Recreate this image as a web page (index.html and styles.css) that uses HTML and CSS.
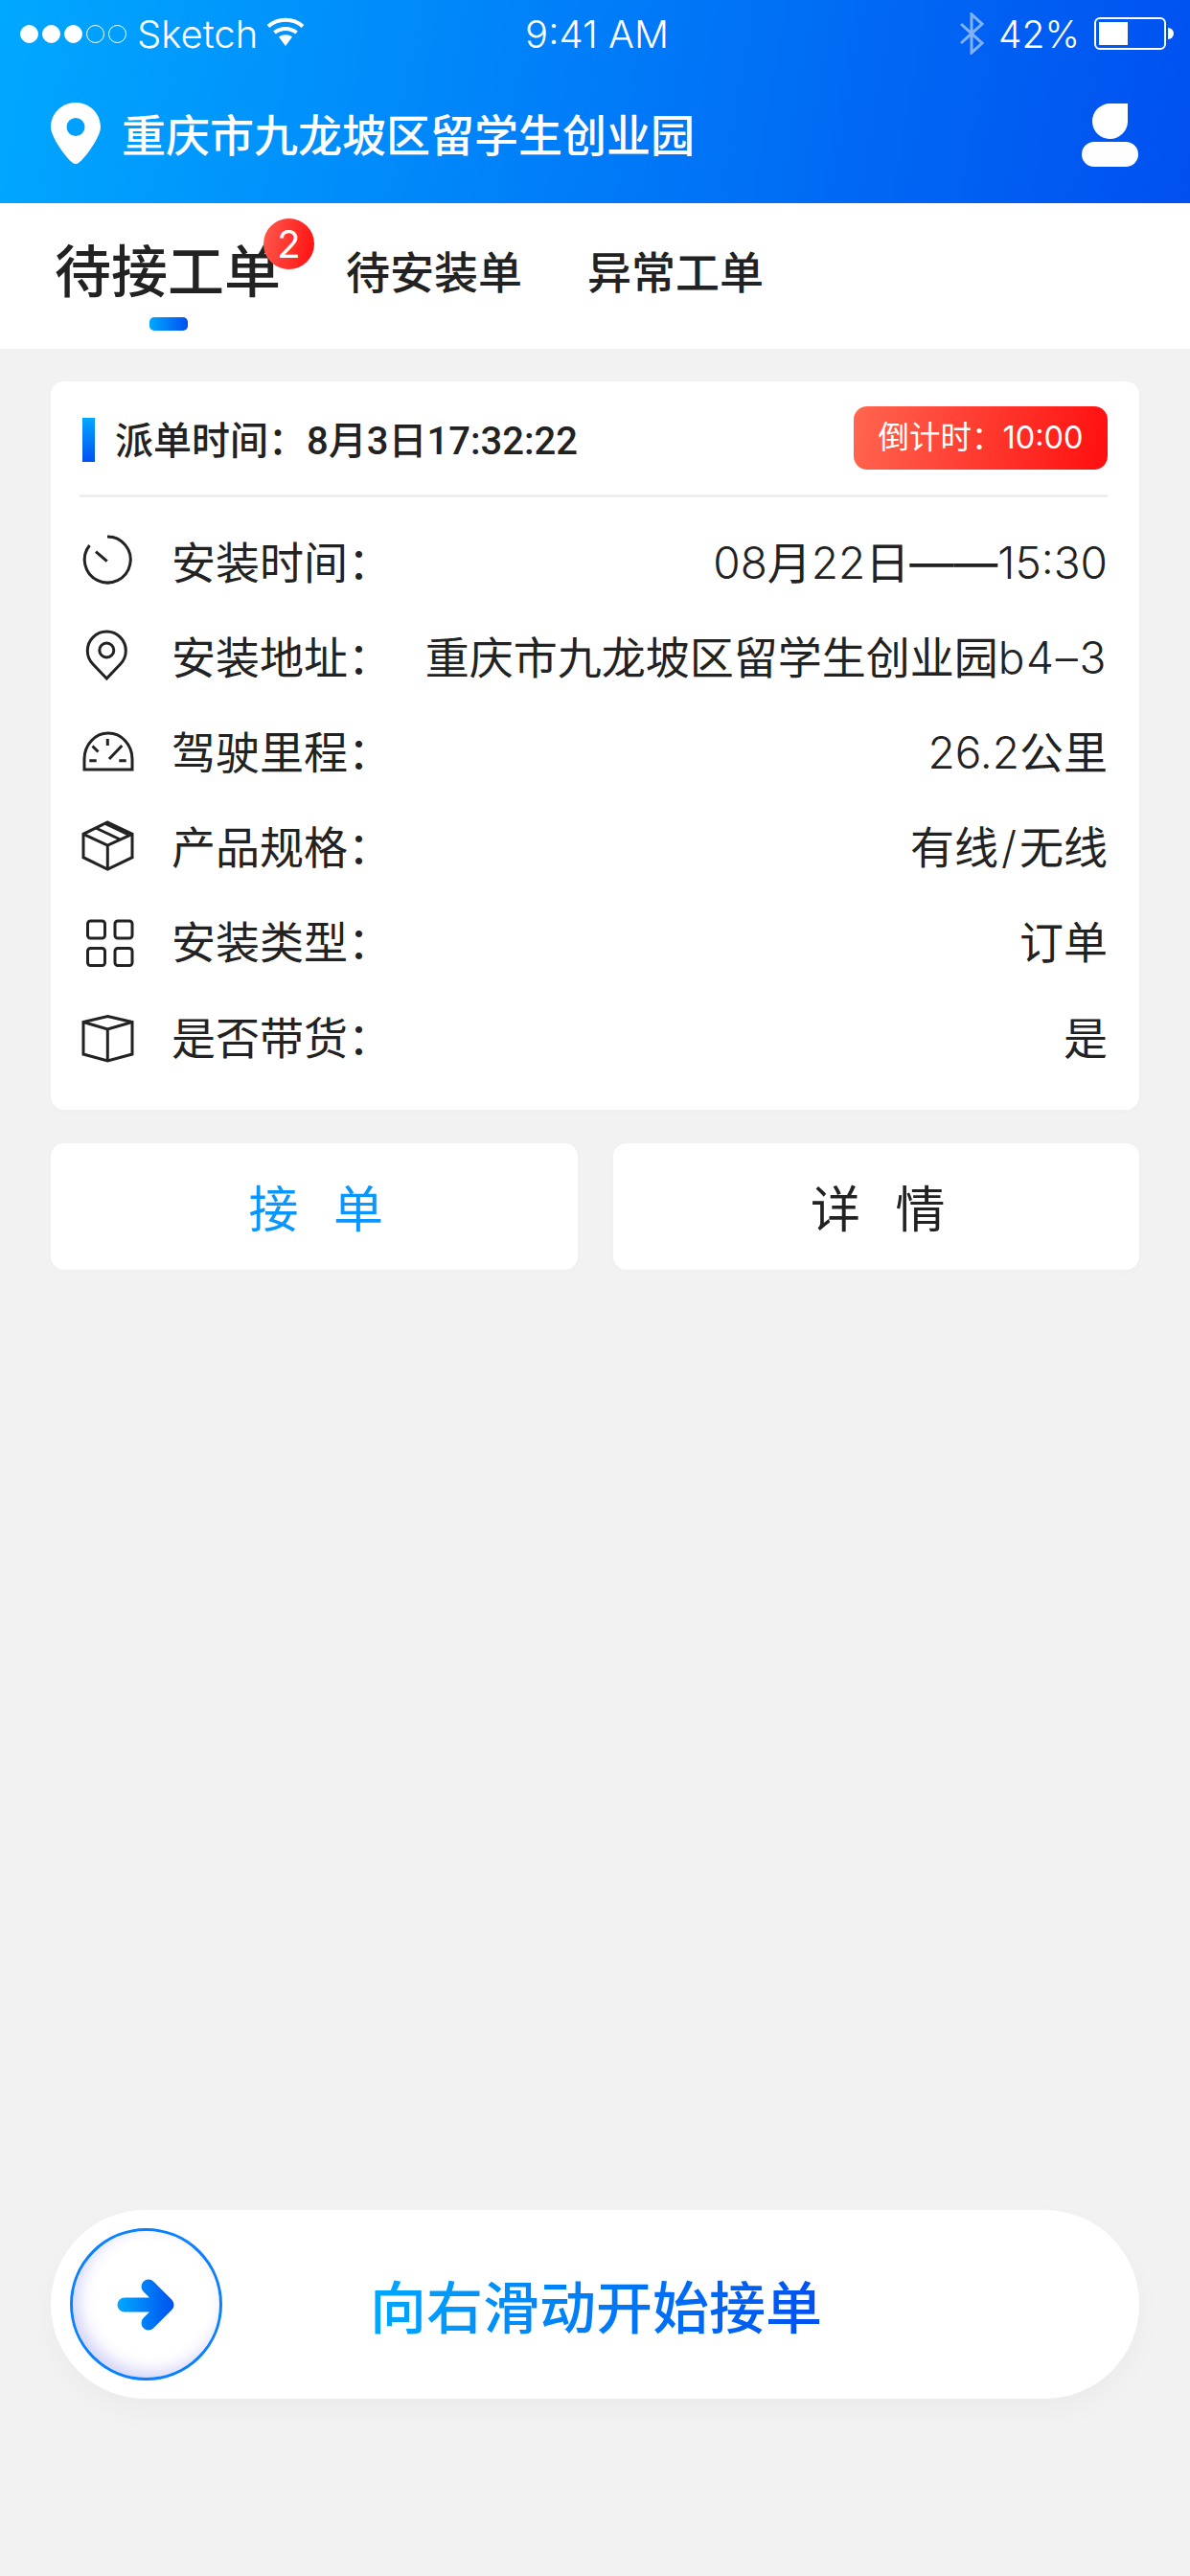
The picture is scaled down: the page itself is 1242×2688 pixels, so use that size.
FILE: index.html
```html
<!DOCTYPE html>
<html lang="zh-CN">
<head>
  <meta charset="UTF-8">
  <title>待接工单</title>
  <link rel="stylesheet" href="styles.css">
</head>
<body>

  <header class="top">
    <div class="status">
      <div class="status-left">
        <span class="dots"><i class="on"></i><i class="on"></i><i class="on"></i><i></i><i></i></span>
        <span class="carrier">Sketch</span>
        <svg class="wifi" width="40" height="30" viewBox="0 0 40 30">
          <path d="M2 9.500C12 0.500 28 0.500 38 9.500" fill="none" stroke="#fff" stroke-width="4"/>
          <path d="M8.500 16C15 10.500 25 10.500 31.500 16" fill="none" stroke="#fff" stroke-width="4"/>
          <path d="M13 20.500C17 17.500 23 17.500 27 20.500L20 30Z" fill="#fff"/>
        </svg>
      </div>
      <div class="status-time">9:41 AM</div>
      <div class="status-right">
        <svg class="bt" width="26" height="44" viewBox="0 0 26 44">
          <path d="M2 12L24 32L13 42V2L24 12L2 32" fill="none" stroke="#fff" stroke-width="3"/>
        </svg>
        <span class="percent">42%</span>
        <span class="battery"><span class="battery-fill"></span></span>
        <span class="battery-nub"></span>
      </div>
    </div>
    <div class="address-bar">
      <svg class="pin" width="52" height="64" viewBox="0 0 52 64">
        <path fill-rule="evenodd" fill="#fff" d="M26 0C40.500 0 52 11.500 52 25.500C52 36 36 58 29 63C27.500 64.300 24.500 64.300 23 63C16 58 0 36 0 25.500C0 11.500 11.500 0 26 0ZM26 16A9.500 9.500 0 1 0 26 35A9.500 9.500 0 1 0 26 16Z"/>
      </svg>
      <span class="address">重庆市九龙坡区留学生创业园</span>
      <svg class="profile" width="60" height="66" viewBox="0 0 60 66">
        <path fill="#fff" d="M29.500 0H48V19A18.500 18.500 0 1 1 29.500 0Z"/>
        <rect x="0" y="40" width="59" height="26" rx="13" fill="#fff"/>
      </svg>
    </div>
  </header>

  <nav class="tabs">
    <div class="tab tab-active">
      待接工单
      <span class="count">2</span>
      <span class="tab-line"></span>
    </div>
    <div class="tab">待安装单</div>
    <div class="tab">异常工单</div>
  </nav>

  <main class="content">
    <section class="card">
      <div class="card-head">
        <span class="mark"></span>
        <span class="dispatch">派单时间：8月3日17:32:22</span>
        <span class="countdown">倒计时：10:00</span>
      </div>

      <ul class="rows">
        <li class="row">
          <svg class="icon" width="54" height="54" viewBox="0 0 54 54">
            <path d="M27 3A24 24 0 1 1 8.500 12"/>
            <path d="M15 18.700L26.700 28.700"/>
          </svg>
          <span class="label">安装时间：</span>
          <span class="value"><span class="num">08</span>月<span class="num">22</span>日——<span class="num">15:30</span></span>
        </li>
        <li class="row">
          <svg class="icon" width="54" height="54" viewBox="0 0 54 54">
            <path d="M26.300 52L12 37A20 20 0 1 1 40.600 37Z"/>
            <circle cx="26.300" cy="22.500" r="7.500"/>
          </svg>
          <span class="label">安装地址：</span>
          <span class="value">重庆市九龙坡区留学生创业园<span class="num room">b4–3</span></span>
        </li>
        <li class="row">
          <svg class="icon" width="54" height="54" viewBox="0 0 54 54">
            <path d="M3 48V37A25 27 0 0 1 53 37V48Z"/>
            <path d="M27.300 16V23M11.500 23.500L17.500 29.500M42.300 23L29 37M8.300 38.700H15.700M39.300 38.700H46.700"/>
          </svg>
          <span class="label">驾驶里程：</span>
          <span class="value"><span class="num">26.2</span>公里</span>
        </li>
        <li class="row">
          <svg class="icon" width="54" height="54" viewBox="0 0 54 54">
            <path d="M27.300 4L53 16.300V40.700L27.300 53L2 40.700V16.300Z"/>
            <path d="M2 16.300L27.300 28L53 16.300M27.300 28V53M15 10L40.500 22M25 5.500L49 17"/>
          </svg>
          <span class="label">产品规格：</span>
          <span class="value">有线<span class="num slash">/</span>无线</span>
        </li>
        <li class="row">
          <svg class="icon" width="54" height="54" viewBox="0 0 54 54">
            <rect x="6.500" y="8" width="18" height="18" rx="3"/>
            <rect x="35" y="8" width="18" height="18" rx="3"/>
            <rect x="6.500" y="36.500" width="18" height="18" rx="3"/>
            <rect x="35" y="36.500" width="18" height="18" rx="3"/>
          </svg>
          <span class="label">安装类型：</span>
          <span class="value">订单</span>
        </li>
        <li class="row">
          <svg class="icon" width="54" height="54" viewBox="0 0 54 54">
            <path d="M27.300 7.500L53 13.500V47L27.300 54L2 47V13.500Z"/>
            <path d="M2 13.500L27.300 21L53 13.500M27.300 21V54"/>
          </svg>
          <span class="label">是否带货：</span>
          <span class="value">是</span>
        </li>
      </ul>
    </section>

    <div class="actions">
      <button class="action action-accept">接 单</button>
      <button class="action">详 情</button>
    </div>
  </main>

  <div class="slider">
    <span class="knob">
      <svg width="80" height="70" viewBox="0 0 80 70">
        <defs>
          <linearGradient id="arrowFill" gradientUnits="userSpaceOnUse" x1="10" y1="0" x2="68" y2="0">
            <stop offset="0" stop-color="#00a8ff"/>
            <stop offset="1" stop-color="#0052f0"/>
          </linearGradient>
        </defs>
        <path d="M17 35H60M42 16L61 35L42 54" fill="none" stroke="url(#arrowFill)" stroke-width="15" stroke-linecap="round" stroke-linejoin="round"/>
      </svg>
    </span>
    <span class="slider-text">向右滑动开始接单</span>
  </div>

</body>
</html>
```

FILE: styles.css
```css
* {
  box-sizing: border-box;
}
html, body {
  height: 100%;
}
body {
  margin: 0;
  display: flex;
  flex-direction: column;
  background-color: #f2f2f2;
  color: #222;
  font-family: Inter, "Noto Sans CJK SC", sans-serif;
}

/* top blue area */
.top {
  height: 212px;
  background: linear-gradient(100deg, #00a8ff, #0050f0);
  color: #fff;
}
.status {
  display: grid;
  grid-template-columns: 1fr auto 1fr;
  align-items: center;
  height: 70px;
  padding: 0 17px 0 21px;
  font-weight: 300;
  font-size: 40px;
}
.status-left, .status-right {
  display: flex;
  align-items: center;
}
.status-right {
  justify-content: flex-end;
}
.dots {
  display: flex;
  gap: 4px;
}
.dots i {
  width: 19px;
  height: 19px;
  border: 1.5px solid #fff;
  border-radius: 50%;
}
.dots i.on {
  background-color: #fff;
}
.carrier {
  margin-left: 11px;
}
.wifi {
  margin-left: 9px;
  margin-bottom: 4px;
}
.bt {
  opacity: 0.5;
  margin-right: 15px;
}
.percent {
  margin-right: 15px;
  font-size: 39px;
}
.battery {
  width: 75px;
  height: 34px;
  padding: 3px;
  border: 2px solid #fff;
  border-radius: 6px;
}
.battery-fill {
  display: block;
  width: 30px;
  height: 100%;
  background-color: #fff;
}
.battery-nub {
  width: 6px;
  height: 12px;
  margin-left: 2px;
  background-color: #fff;
  border-radius: 0 6px 6px 0;
}
.address-bar {
  display: flex;
  align-items: center;
  height: 142px;
  padding: 0 53px;
}
.pin {
  margin-top: -4px;
}
.address {
  margin-left: 22px;
  flex: 1;
  font-size: 46px;
  line-height: 1;
  font-weight: 500;
}

/* tabs */
.tabs {
  display: flex;
  align-items: center;
  gap: 68px;
  height: 152px;
  padding: 0 0 8px 57px;
  background-color: #fff;
}
.tab {
  position: relative;
  font-size: 46px;
  line-height: 60px;
  font-weight: 500;
}
.tab-active {
  font-size: 59px;
  line-height: 70px;
}
.count {
  position: absolute;
  top: -21px;
  right: -35px;
  width: 53px;
  height: 53px;
  border-radius: 50%;
  background: linear-gradient(100deg, #ff5a4d, #ff0f0f);
  color: #fff;
  font-size: 40px;
  font-weight: 400;
  line-height: 53px;
  text-align: center;
}
.tab-line {
  position: absolute;
  left: 99px;
  bottom: -26px;
  width: 40px;
  height: 14px;
  border-radius: 5px;
  background: linear-gradient(90deg, #00a8ff, #0050f0);
}

/* card */
.content {
  padding: 34px 53px 0;
}
.card {
  height: 760px;
  padding: 26px 33px 0 30px;
  background-color: #fff;
  border-radius: 14px;
  box-shadow: 0 2px 8px rgba(0,0,0,0.02);
}
.card-head {
  display: flex;
  align-items: center;
  height: 95px;
  margin-bottom: 15px;
  border-bottom: 3px solid #eee;
  padding-bottom: 26px;
}
.mark {
  width: 13px;
  height: 46px;
  margin: 4px 0 0 3px;
  background: linear-gradient(180deg, #00a8ff, #0050f0);
}
.dispatch {
  flex: 1;
  margin-left: 21px;
  font-family: Roboto, "Noto Sans CJK SC", sans-serif;
  font-size: 40px;
  font-weight: 500;
}
.countdown {
  width: 265px;
  height: 66px;
  border-radius: 14px;
  background: linear-gradient(100deg, #ff6650, #ff0f0f);
  color: #fff;
  font-size: 32.5px;
  line-height: 66px;
  text-align: center;
}
.rows {
  list-style: none;
  margin: 0;
  padding: 0;
}
.row {
  display: flex;
  align-items: center;
  height: 99.2px;
  padding-left: 2px;
  font-size: 46px;
  font-weight: 400;
}
.icon {
  fill: none;
  stroke: #222;
  stroke-width: 3;
  overflow: visible;
}
.label {
  margin-left: 40px;
}
.value {
  flex: 1;
  text-align: right;
}
.num {
  font-weight: 300;
}
.room {
  letter-spacing: 1.7px;
}
.slash {
  padding: 0 3px;
}

/* buttons */
.actions {
  display: flex;
  gap: 37px;
  margin-top: 35px;
}
.action {
  flex: 1;
  height: 132px;
  padding: 0 0 2px 4px;
  border: 0;
  border-radius: 14px;
  background-color: #fff;
  color: #222;
  font-family: inherit;
  font-size: 52px;
  font-weight: 400;
  word-spacing: 22px;
  box-shadow: 0 2px 8px rgba(0,0,0,0.02);
}
.action-accept {
  color: #0a96ff;
}

/* slider */
.slider {
  display: flex;
  align-items: center;
  height: 197px;
  margin: auto 53px 185px;
  padding-left: 20px;
  background-color: #fff;
  border-radius: 99px;
  box-shadow: 0 12px 30px rgba(0,0,0,0.03);
}
.knob {
  display: flex;
  align-items: center;
  justify-content: center;
  width: 159px;
  height: 159px;
  border: 3px solid #0a80ff;
  border-radius: 50%;
  box-shadow: inset 6px -6px 16px rgba(110,110,230,0.3);
}
.slider-text {
  margin-left: 154px;
  font-size: 59px;
  font-weight: 500;
  background: linear-gradient(90deg, #00a8ff, #0050f0);
  -webkit-background-clip: text;
  background-clip: text;
  color: transparent;
}
```
